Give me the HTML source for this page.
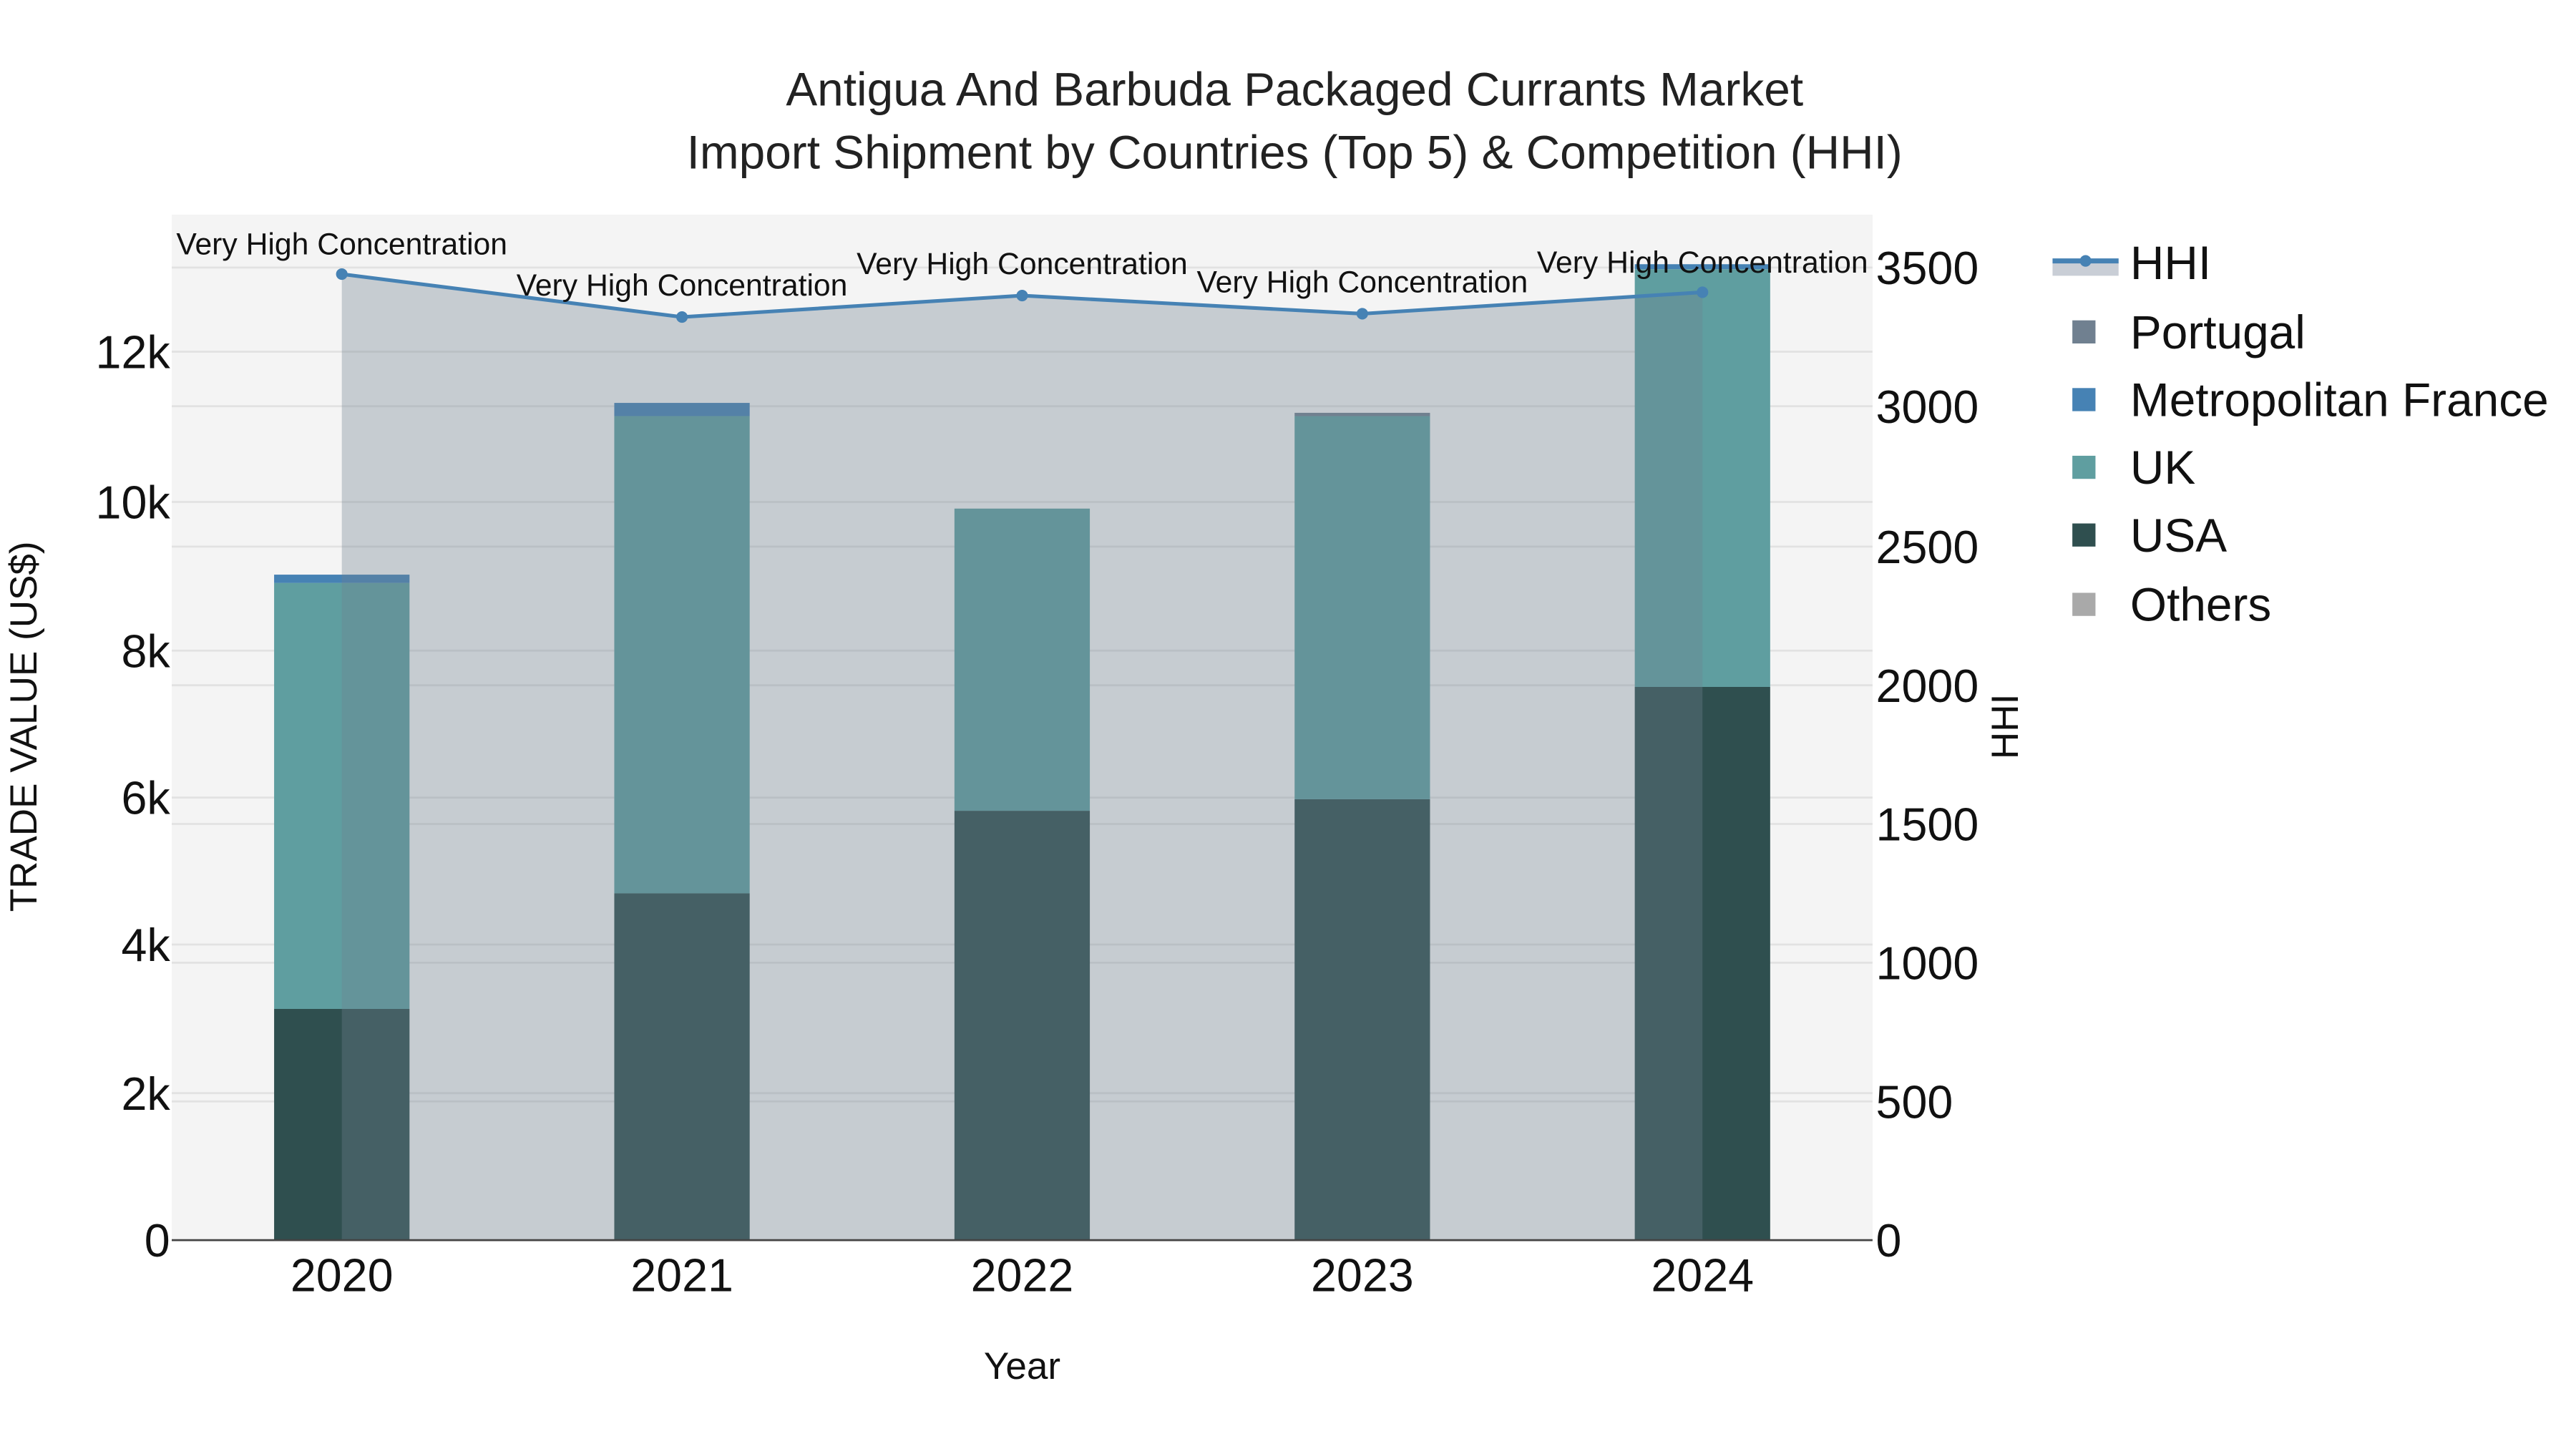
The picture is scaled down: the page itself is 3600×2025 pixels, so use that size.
<!DOCTYPE html>
<html><head><meta charset="utf-8"><style>
html,body{margin:0;padding:0;background:#fff;}
svg{display:block;}
text{font-family:"Liberation Sans",sans-serif;}
</style></head><body>
<svg width="3600" height="2025" viewBox="0 0 1560 877.5" xmlns="http://www.w3.org/2000/svg">
<rect x="0" y="0" width="1560" height="877.5" fill="#fff"/>
<text x="784" y="64" font-size="28.5" text-anchor="middle" fill="#222">Antigua And Barbuda Packaged Currants Market</text>
<text x="784" y="102" font-size="28.5" text-anchor="middle" fill="#222">Import Shipment by Countries (Top 5) &amp; Competition (HHI)</text>
<rect x="104" y="130" width="1030" height="621" fill="#f4f4f4"/>
<g stroke="#e2e2e2" stroke-width="1.2">
<line x1="104" x2="1134" y1="662" y2="662"/><line x1="104" x2="1134" y1="572" y2="572"/><line x1="104" x2="1134" y1="483" y2="483"/><line x1="104" x2="1134" y1="394" y2="394"/><line x1="104" x2="1134" y1="304" y2="304"/><line x1="104" x2="1134" y1="213" y2="213"/>
<line x1="104" x2="1134" y1="667" y2="667"/><line x1="104" x2="1134" y1="583" y2="583"/><line x1="104" x2="1134" y1="499" y2="499"/><line x1="104" x2="1134" y1="415" y2="415"/><line x1="104" x2="1134" y1="331" y2="331"/><line x1="104" x2="1134" y1="246" y2="246"/><line x1="104" x2="1134" y1="162" y2="162"/>
</g>
<g>
<rect x="166" y="611" width="82" height="140" fill="#2f4f4f"/>
<rect x="166" y="353" width="82" height="258" fill="#5f9ea0"/>
<rect x="166" y="348" width="82" height="5" fill="#4682b4"/>
<rect x="372" y="541" width="82" height="210" fill="#2f4f4f"/>
<rect x="372" y="252" width="82" height="289" fill="#5f9ea0"/>
<rect x="372" y="244" width="82" height="8" fill="#4682b4"/>
<rect x="578" y="491" width="82" height="260" fill="#2f4f4f"/>
<rect x="578" y="308" width="82" height="183" fill="#5f9ea0"/>
<rect x="784" y="484" width="82" height="267" fill="#2f4f4f"/>
<rect x="784" y="252" width="82" height="232" fill="#5f9ea0"/>
<rect x="784" y="250" width="82" height="2" fill="#708090"/>
<rect x="990" y="416" width="82" height="335" fill="#2f4f4f"/>
<rect x="990" y="163" width="82" height="253" fill="#5f9ea0"/>
<rect x="990" y="160" width="82" height="3" fill="#4682b4"/>
</g>
<polygon points="207,751 207,166 413,192 619,179 825,190 1031,177 1031,751" fill="#708090" fill-opacity="0.35"/>
<polyline points="207,166 413,192 619,179 825,190 1031,177" fill="none" stroke="#4682b4" stroke-width="2.2"/>
<g fill="#4682b4"><circle cx="207" cy="166" r="3.5"/><circle cx="413" cy="192" r="3.5"/><circle cx="619" cy="179" r="3.5"/><circle cx="825" cy="190" r="3.5"/><circle cx="1031" cy="177" r="3.5"/></g>
<g font-size="18.5" text-anchor="middle" fill="#111">
<text x="207" y="154">Very High Concentration</text>
<text x="413" y="179">Very High Concentration</text>
<text x="619" y="166">Very High Concentration</text>
<text x="825" y="177">Very High Concentration</text>
<text x="1031" y="165">Very High Concentration</text>
</g>
<line x1="104" x2="1134" y1="751" y2="751" stroke="#444" stroke-width="1.2"/>
<g font-size="28" text-anchor="end" fill="#111">
<text x="103" y="761">0</text><text x="103" y="672">2k</text><text x="103" y="582">4k</text><text x="103" y="493">6k</text><text x="103" y="404">8k</text><text x="103" y="314">10k</text><text x="103" y="223">12k</text>
</g>
<g font-size="28" text-anchor="start" fill="#111">
<text x="1136" y="761">0</text><text x="1136" y="677">500</text><text x="1136" y="593">1000</text><text x="1136" y="509">1500</text><text x="1136" y="425">2000</text><text x="1136" y="341">2500</text><text x="1136" y="256">3000</text><text x="1136" y="172">3500</text>
</g>
<g font-size="28" text-anchor="middle" fill="#111">
<text x="207" y="782">2020</text><text x="413" y="782">2021</text><text x="619" y="782">2022</text><text x="825" y="782">2023</text><text x="1031" y="782">2024</text>
</g>
<text x="619" y="835" font-size="23" text-anchor="middle" fill="#111">Year</text>
<text transform="translate(22,440) rotate(-90)" font-size="23" text-anchor="middle" fill="#111">TRADE VALUE (US$)</text>
<text transform="translate(1222,440) rotate(-90)" font-size="23" text-anchor="middle" fill="#111">HHI</text>
<rect x="1243" y="159" width="40" height="8" fill="#c9ced6"/>
<line x1="1243" x2="1283" y1="158" y2="158" stroke="#4682b4" stroke-width="3"/>
<circle cx="1263" cy="158" r="3.5" fill="#4682b4"/>
<rect x="1255" y="194" width="14" height="14" fill="#708090"/>
<rect x="1255" y="235" width="14" height="14" fill="#4682b4"/>
<rect x="1255" y="276" width="14" height="14" fill="#5f9ea0"/>
<rect x="1255" y="317" width="14" height="14" fill="#2f4f4f"/>
<rect x="1255" y="359" width="14" height="14" fill="#a9a9a9"/>
<g font-size="28.5" fill="#111">
<text x="1290" y="169">HHI</text><text x="1290" y="211">Portugal</text><text x="1290" y="252">Metropolitan France</text><text x="1290" y="293">UK</text><text x="1290" y="334">USA</text><text x="1290" y="376">Others</text>
</g>
</svg>
</body></html>
